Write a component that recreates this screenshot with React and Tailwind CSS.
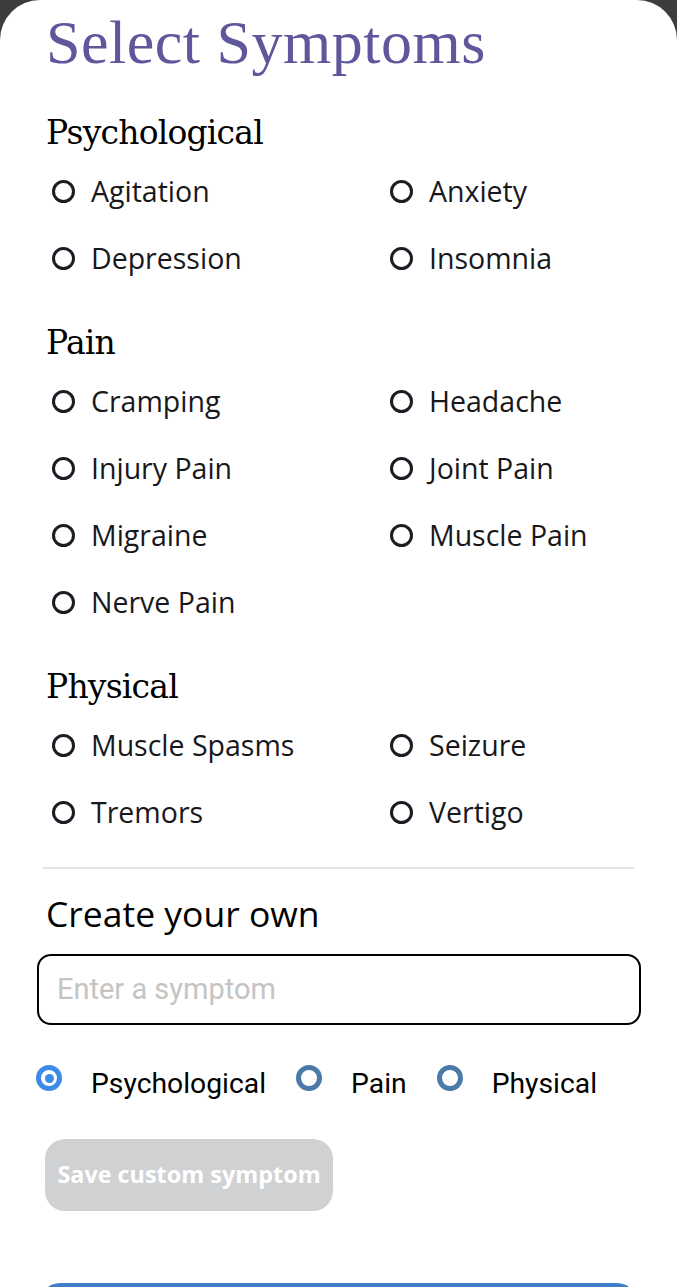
import React from "react";

const sections = [
  { title: "Psychological", items: ["Agitation", "Anxiety", "Depression", "Insomnia"] },
  { title: "Pain", items: ["Cramping", "Headache", "Injury Pain", "Joint Pain", "Migraine", "Muscle Pain", "Nerve Pain"] },
  { title: "Physical", items: ["Muscle Spasms", "Seizure", "Tremors", "Vertigo"] },
];

function Option({ label }) {
  return (
    <div className="flex items-center h-[67px] pl-[6px]">
      <span className="w-[23px] h-[23px] rounded-full border-[3px] border-[#1c1c24] shrink-0" />
      <span className="ml-[16px] text-[28.5px] text-[#18181c]">{label}</span>
    </div>
  );
}

function Radio({ selected, label }) {
  return (
    <div className="flex items-center">
      <span
        className={`w-[26px] h-[26px] rounded-full flex items-center justify-center shrink-0 border-[5px] ${selected ? "border-[#3d8be8]" : "border-[#4a7aa8]"}`}
      >
        {selected && <span className="w-[9px] h-[9px] rounded-full bg-[#3d8be8]" />}
      </span>
      <span className="ml-[29px] mt-[12px] text-[28.3px] text-black font-['Roboto',sans-serif]">{label}</span>
    </div>
  );
}

export default function App() {
  return (
    <div className="bg-[#3d3d3d] w-[677px] h-[1287px] overflow-hidden">
      <div className="bg-white rounded-t-[40px] h-full font-['Open_Sans',sans-serif]">
        <div className="px-[46px]">
          <h1 className="pt-[7px] h-[77px] leading-[70px] text-[62px] text-[#5e579c] font-['Liberation_Serif',serif] tracking-[0.5px]">
            Select Symptoms
          </h1>
          {sections.map((s, i) => (
            <div key={s.title} className={i === 0 ? "mt-[30px]" : "mt-[25px]"}>
              <h2 className="h-[51px] leading-[51px] text-[33px] text-black font-['DejaVu_Serif',serif] tracking-[-0.8px]">
                {s.title}
              </h2>
              <div className="grid grid-cols-[338px_1fr]">
                {s.items.map((it) => (
                  <Option key={it} label={it} />
                ))}
              </div>
            </div>
          ))}
        </div>
        <div className="mx-[43px] mt-[21px] h-[2px] bg-[#e2e2e2]" />
        <div className="px-[46px] mt-[21px] h-[46px] leading-[46px] text-[35.5px] text-black">
          Create your own
        </div>
        <div className="px-[37px] mt-[18px]">
          <div className="h-[71px] w-[604px] border-2 border-black rounded-[14px] flex items-center pl-[18px]">
            <span className="text-[29px] text-[#c4c4c4] font-['Roboto',sans-serif]">Enter a symptom</span>
          </div>
        </div>
        <div className="flex items-center gap-[30px] pl-[36px] mt-[33px] h-[40px]">
          <Radio selected label="Psychological" />
          <Radio label="Pain" />
          <Radio label="Physical" />
        </div>
        <div className="pl-[45px] mt-[41px]">
          <div className="w-[288px] h-[72px] rounded-[20px] bg-[#d0d1d3] flex items-center justify-center">
            <span className="text-[23.4px] font-bold text-white">Save custom symptom</span>
          </div>
        </div>
        <div className="mx-[40px] mt-[72px] h-[60px] rounded-[20px] bg-[#3f7fc8]" />
      </div>
    </div>
  );
}
